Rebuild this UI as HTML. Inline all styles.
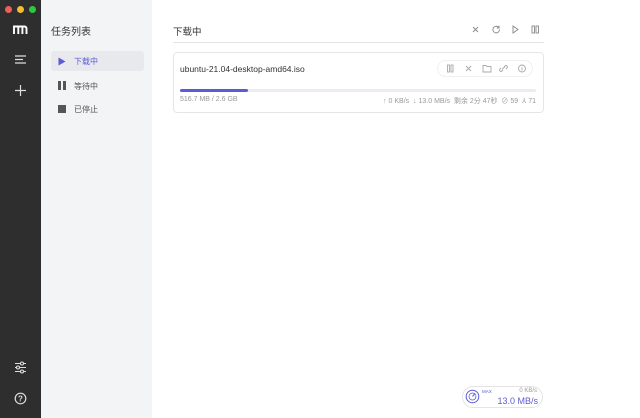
<!DOCTYPE html>
<html><head><meta charset="utf-8"><style>
*{margin:0;padding:0;box-sizing:border-box}
body{width:640px;height:418px;overflow:hidden;font-family:"Liberation Sans","Noto Sans CJK SC",sans-serif;background:#fff;position:relative}
.dark{position:absolute;left:0;top:0;width:41px;height:418px;background:#2e2e2e}
.side{position:absolute;left:41px;top:0;width:111px;height:418px;background:#f3f4f6}
.abs{position:absolute}
.dot{position:absolute;top:6px;width:7px;height:7px;border-radius:50%}
.s{font-size:7px;color:#999}
</style></head><body>
<div class="dark"></div>
<div class="dot" style="left:5px;background:#ed5f57"></div>
<div class="dot" style="left:17px;background:#f5bd2f"></div>
<div class="dot" style="left:29px;background:#2ec840"></div>
<svg class="abs" style="left:12px;top:23px" width="17" height="12" viewBox="0 0 17 12"><path d="M2 11V3.5h10.5a2 2 0 0 1 2 2V11M6.3 3.5V11M10.4 3.5V11" stroke="#fff" stroke-width="1.9" fill="none"/></svg>
<svg class="abs" style="left:14px;top:54px" width="13" height="11"><path d="M1 2h11M1 5.5h8M1 9h11" stroke="#ddd" stroke-width="1.2"/></svg>
<svg class="abs" style="left:14px;top:84px" width="13" height="13"><path d="M6.5 1v11M1 6.5h11" stroke="#ddd" stroke-width="1.2"/></svg>
<svg class="abs" style="left:14px;top:361px" width="13" height="13"><g stroke="#ddd" stroke-width="1.1" fill="#2e2e2e"><path d="M1 2.5h11M1 6.5h11M1 10.5h11"/><circle cx="8" cy="2.5" r="1.5"/><circle cx="4" cy="6.5" r="1.5"/><circle cx="8" cy="10.5" r="1.5"/></g></svg>
<svg class="abs" style="left:14px;top:392px" width="13" height="13"><circle cx="6.5" cy="6.5" r="5.3" stroke="#ddd" stroke-width="1.2" fill="none"/><text x="6.5" y="9.3" font-size="8" fill="#ddd" text-anchor="middle" font-family="Liberation Sans" font-weight="bold">?</text></svg>
<div class="side"></div>
<div class="abs" style="left:51px;top:23px;font-size:10px;color:#333">任务列表</div>
<div class="abs" style="left:51px;top:51px;width:93px;height:20px;background:#e8e9ed;border-radius:3px"></div>
<svg class="abs" style="left:58px;top:57px" width="8" height="9"><path d="M0.5 0.5L7.5 4.5L0.5 8.5Z" fill="#5b5bd6"/></svg>
<div class="abs" style="left:74px;top:56px;font-size:8px;color:#5b5bd6">下载中</div>
<svg class="abs" style="left:58px;top:81px" width="8" height="9"><rect x="0" y="0" width="3" height="9" fill="#555"/><rect x="5" y="0" width="3" height="9" fill="#555"/></svg>
<div class="abs" style="left:74px;top:81px;font-size:8px;color:#555">等待中</div>
<div class="abs" style="left:58px;top:105px;width:8px;height:8px;background:#555"></div>
<div class="abs" style="left:74px;top:104px;font-size:8px;color:#555">已停止</div>

<div class="abs" style="left:173px;top:24px;font-size:9.5px;color:#333">下载中</div>
<svg class="abs" style="left:470px;top:24px" width="75" height="11" viewBox="0 0 75 11" fill="none" stroke="#888" stroke-width="0.9"><path d="M3 3l5 5M8 3l-5 5"/><path d="M28.5 3.2a3.3 3.3 0 1 0 1 2.3M29 1.8v2.2h-2.2"/><path d="M43 2l5 3.5l-5 3.5z"/><rect x="62" y="2" width="2.5" height="7"/><rect x="66" y="2" width="2.5" height="7"/></svg>
<div class="abs" style="left:173px;top:42px;width:371px;height:1px;background:#e4e4e4"></div>
<div class="abs" style="left:173px;top:52px;width:371px;height:61px;border:1px solid #e6e6e6;border-radius:4px"></div>
<div class="abs" style="left:180px;top:64px;font-size:8.5px;color:#333">ubuntu-21.04-desktop-amd64.iso</div>
<div class="abs" style="left:437px;top:60px;width:96px;height:17px;border:1px solid #f0f0f0;border-radius:9px"></div>
<svg class="abs" style="left:445px;top:63px" width="85" height="11" viewBox="0 0 85 11" fill="none" stroke="#aaa" stroke-width="0.9"><rect x="2.5" y="2" width="2" height="7"/><rect x="6" y="2" width="2" height="7"/><path d="M21 3l5 5M26 3l-5 5"/><path d="M38 2.5h3l1 1h4v5.5h-8z"/><path d="M57 6.5l3-3M56 5l-1 1a1.4 1.4 0 0 0 2 2l1-1M61 6l1-1a1.4 1.4 0 0 0-2-2l-1 1"/><circle cx="77" cy="5.5" r="3.5"/><path d="M77 4.5v3M77 3v.3"/></svg>
<div class="abs" style="left:180px;top:89px;width:356px;height:3px;background:#ebebf3;border-radius:2px"></div>
<div class="abs" style="left:180px;top:89px;width:68px;height:3px;background:#5b5bd6;border-radius:2px"></div>
<div class="abs s" style="left:180px;top:96px">516.7 MB / 2.6 GB</div>
<div class="abs s" style="right:104px;top:96px;white-space:nowrap">↑ 0 KB/s &nbsp;↓ 13.0 MB/s &nbsp;剩余 2分 47秒 &nbsp;⊘ 59 &nbsp;⅄ 71</div>

<div class="abs" style="left:462px;top:386px;width:81px;height:22px;border:1px solid #e4e4e4;border-radius:11px"></div>
<svg class="abs" style="left:465px;top:389px" width="15" height="15"><circle cx="7.5" cy="7.5" r="6.3" stroke="#5b5bd6" stroke-width="1" fill="none"/><circle cx="7.5" cy="7.5" r="3.5" stroke="#5b5bd6" stroke-width="0.8" fill="none"/><path d="M7.5 7.5l2.5-3" stroke="#5b5bd6" stroke-width="1"/></svg>
<div class="abs" style="left:482px;top:389px;font-size:4.5px;color:#5b5bd6">MAX</div>
<div class="abs" style="right:103px;top:388px;font-size:6px;color:#999">0 KB/s</div>
<div class="abs" style="right:102px;top:396px;font-size:9px;color:#5b5bd6">13.0 MB/s</div>
</body></html>
